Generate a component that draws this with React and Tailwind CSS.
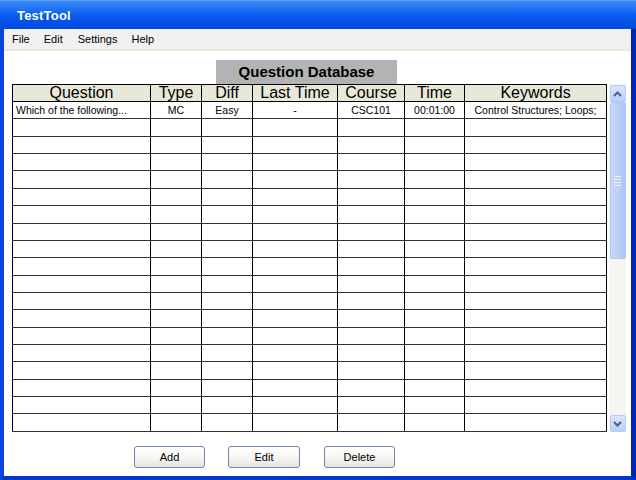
import React from "react";

const cols = [
  { name: "Question", w: 138 },
  { name: "Type", w: 51 },
  { name: "Diff", w: 51 },
  { name: "Last Time", w: 85 },
  { name: "Course", w: 67 },
  { name: "Time", w: 60 },
  { name: "Keywords", w: 142 },
];

const firstRow = ["Which of the following...", "MC", "Easy", "-", "CSC101", "00:01:00", "Control Structures; Loops;"];

function Btn({ label, w }) {
  return (
    <button
      className={`h-[22px] ${w} rounded-[3px] border border-[#6f86b0] bg-gradient-to-b from-white via-[#f6f6f3] to-[#e6e5de] text-[11px] text-black leading-none`}
    >
      {label}
    </button>
  );
}

export default function App() {
  const rows = Array.from({ length: 19 }, (_, i) => (i === 0 ? firstRow : null));
  return (
    <div
      className="w-[636px] h-[480px] flex flex-col bg-[#0038d0] overflow-hidden"
      style={{ fontFamily: '"Liberation Sans", Arial, sans-serif' }}
    >
      {/* Title bar */}
      <div className="h-[29px] shrink-0 flex items-center pl-[17px] bg-gradient-to-b from-[#3b8cf8] via-[#0a5cf0] to-[#0048dc] border-t border-[#5aa0ff]">
        <span className="text-white font-bold text-[13px] tracking-[0.2px] mt-[2px]">TestTool</span>
      </div>
      {/* Body */}
      <div className="flex-1 flex flex-col border-l-4 border-r-[5px] border-b-4 border-l-[#0a45e0] border-r-[#0024b8] border-b-[#0038d0] bg-white">
        {/* Menu bar */}
        <div className="h-[22px] shrink-0 flex items-center bg-[#f1f1f1] border-b-2 border-[#ece9d8] text-[11px] text-black">
          <span className="ml-[8px]">File</span>
          <span className="ml-[14px]">Edit</span>
          <span className="ml-[15px]">Settings</span>
          <span className="ml-[14px]">Help</span>
        </div>
        {/* Content */}
        <div className="flex-1 flex flex-col pl-[8px] pt-[9px]">
          <div className="ml-[204px] w-[181px] h-[24px] bg-[#b3b3b3] flex items-center justify-center text-[15px] font-bold text-black">
            Question Database
          </div>
          <div className="flex gap-[2px]">
            <table className="table-fixed border-collapse border border-black w-[594px]">
              <colgroup>
                {cols.map((c) => (
                  <col key={c.name} style={{ width: c.w }} />
                ))}
              </colgroup>
              <thead>
                <tr className="h-[17px] bg-[#e8e8d9]">
                  {cols.map((c) => (
                    <th key={c.name} className="border border-black font-normal text-[16px] leading-none p-0 text-center">
                      {c.name}
                    </th>
                  ))}
                </tr>
              </thead>
              <tbody>
                {rows.map((r, i) => (
                  <tr key={i} className="h-[17.3px]">
                    {cols.map((c, j) => (
                      <td
                        key={c.name}
                        className={`border-x border-x-black border-b border-b-[#333] p-0 text-[10.5px] leading-none ${
                          j === 0 ? "text-left pl-[3px]" : "text-center"
                        }`}
                      >
                        {r ? r[j] : ""}
                      </td>
                    ))}
                  </tr>
                ))}
              </tbody>
            </table>
            {/* Scrollbar */}
            <div className="w-[17px] h-[348px] flex flex-col bg-[#f5f5f1] items-center pt-[1px]">
              <div className="w-[16px] h-[17px] rounded-[2px] border border-[#b8cbf5] bg-gradient-to-b from-[#dce7fd] to-[#b9cdf8] flex items-center justify-center">
                <svg width="9" height="6" viewBox="0 0 9 6">
                  <path d="M1 5 L4.5 1.5 L8 5" fill="none" stroke="#4d6185" strokeWidth="2" />
                </svg>
              </div>
              <div className="w-[16px] h-[157px] rounded-[2px] border border-[#b2c6f4] bg-gradient-to-r from-[#c9d8fd] via-[#bccffb] to-[#aec4f6] flex flex-col items-center justify-center gap-[2px]">
                <div className="w-[7px] h-[1px] bg-[#eef3ff]" />
                <div className="w-[7px] h-[1px] bg-[#eef3ff]" />
                <div className="w-[7px] h-[1px] bg-[#eef3ff]" />
                <div className="w-[7px] h-[1px] bg-[#eef3ff]" />
              </div>
              <div className="flex-1" />
              <div className="w-[16px] h-[17px] rounded-[2px] border border-[#b8cbf5] bg-gradient-to-b from-[#dce7fd] to-[#b9cdf8] flex items-center justify-center">
                <svg width="9" height="6" viewBox="0 0 9 6">
                  <path d="M1 1 L4.5 4.5 L8 1" fill="none" stroke="#4d6185" strokeWidth="2" />
                </svg>
              </div>
            </div>
          </div>
          {/* Buttons */}
          <div className="flex mt-[14px] ml-[122px]">
            <Btn label="Add" w="w-[71px]" />
            <div className="w-[23px]" />
            <Btn label="Edit" w="w-[72px]" />
            <div className="w-[24px]" />
            <Btn label="Delete" w="w-[71px]" />
          </div>
        </div>
      </div>
    </div>
  );
}
